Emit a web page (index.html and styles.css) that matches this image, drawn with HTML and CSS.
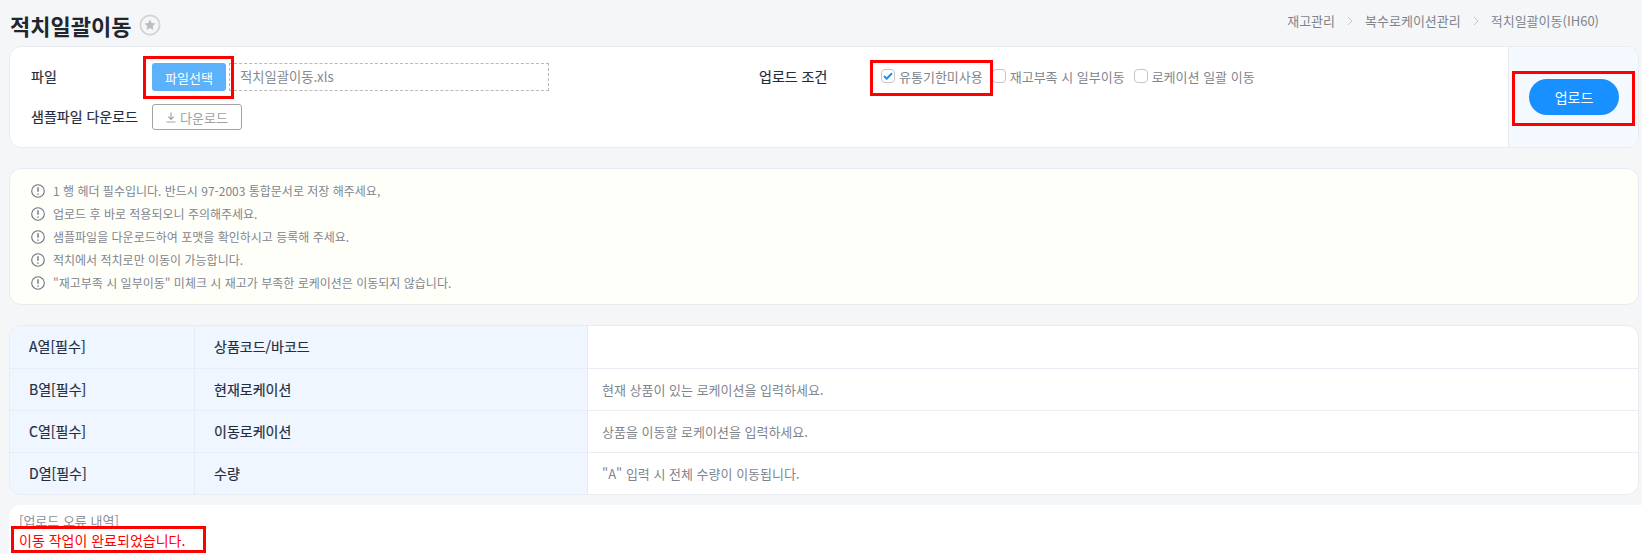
FILE: index.html
```html
<!DOCTYPE html>
<html lang="ko">
<head>
<meta charset="utf-8">
<title>적치일괄이동</title>
<link rel="stylesheet" href="styles.css">
</head>
<body>
<header class="top">
  <div class="title-wrap">
    <h1 class="title">적치일괄이동</h1>
    <span class="star">
      <svg width="22" height="22" viewBox="0 0 22 22"><circle cx="11" cy="11" r="9.6" fill="#f5f6f8" stroke="#d3d3d3" stroke-width="1.8"/><path d="M11 5.6l1.7 3.5 3.8.5-2.8 2.6.7 3.8-3.4-1.9-3.4 1.9.7-3.8-2.8-2.6 3.8-.5z" fill="#bdbdbd"/></svg>
    </span>
  </div>
  <nav class="crumbs">
    <span>재고관리</span>
    <svg class="chev" width="6" height="10" viewBox="0 0 6 10"><path d="M1 1l4 4-4 4" fill="none" stroke="#c4c8cd" stroke-width="1"/></svg>
    <span>복수로케이션관리</span>
    <svg class="chev" width="6" height="10" viewBox="0 0 6 10"><path d="M1 1l4 4-4 4" fill="none" stroke="#c4c8cd" stroke-width="1"/></svg>
    <span>적치일괄이동(IH60)</span>
  </nav>
</header>

<section class="card form-card">
  <div class="form-main">
    <div class="form-col-left">
      <div class="row">
        <span class="label">파일</span>
        <button class="btn-file">파일선택</button>
        <span class="file-name">적치일괄이동.xls</span>
      </div>
      <div class="row row-sample">
        <span class="label">샘플파일 다운로드</span>
        <button class="btn-down">
          <svg width="10" height="11" viewBox="0 0 10 11"><path d="M5 0.5v6.5M2.2 4.6L5 7.4l2.8-2.8M0.5 10h9" fill="none" stroke="#a3a3a3" stroke-width="1.2"/></svg>
          <span>다운로드</span>
        </button>
      </div>
    </div>
    <div class="form-col-right">
      <span class="label label-cond">업로드 조건</span>
      <label class="check"><span class="box"><svg width="10" height="8" viewBox="0 0 10 8"><path d="M1 4l2.7 2.7L9 1.3" fill="none" stroke="#1890ff" stroke-width="2"/></svg></span>유통기한미사용</label>
      <label class="check"><span class="box"></span>재고부족 시 일부이동</label>
      <label class="check"><span class="box"></span>로케이션 일괄 이동</label>
    </div>
  </div>
  <div class="form-side"><button class="btn-upload">업로드</button></div>
</section>

<section class="card notice">
  <ul class="notes">
    <li><svg class="ico" viewBox="0 0 14 14"><circle cx="7" cy="7" r="6.3" fill="none" stroke="#6b7280" stroke-width="1.1"/><path d="M7 3.2v4.6M7 9.4v1.4" stroke="#6b7280" stroke-width="1.4" fill="none"/></svg>1 행 헤더 필수입니다. 반드시 97-2003 통합문서로 저장 해주세요,</li>
    <li><svg class="ico" viewBox="0 0 14 14"><circle cx="7" cy="7" r="6.3" fill="none" stroke="#6b7280" stroke-width="1.1"/><path d="M7 3.2v4.6M7 9.4v1.4" stroke="#6b7280" stroke-width="1.4" fill="none"/></svg>업로드 후 바로 적용되오니 주의해주세요.</li>
    <li><svg class="ico" viewBox="0 0 14 14"><circle cx="7" cy="7" r="6.3" fill="none" stroke="#6b7280" stroke-width="1.1"/><path d="M7 3.2v4.6M7 9.4v1.4" stroke="#6b7280" stroke-width="1.4" fill="none"/></svg>샘플파일을 다운로드하여 포맷을 확인하시고 등록해 주세요.</li>
    <li><svg class="ico" viewBox="0 0 14 14"><circle cx="7" cy="7" r="6.3" fill="none" stroke="#6b7280" stroke-width="1.1"/><path d="M7 3.2v4.6M7 9.4v1.4" stroke="#6b7280" stroke-width="1.4" fill="none"/></svg>적치에서 적치로만 이동이 가능합니다.</li>
    <li><svg class="ico" viewBox="0 0 14 14"><circle cx="7" cy="7" r="6.3" fill="none" stroke="#6b7280" stroke-width="1.1"/><path d="M7 3.2v4.6M7 9.4v1.4" stroke="#6b7280" stroke-width="1.4" fill="none"/></svg>"재고부족 시 일부이동" 미체크 시 재고가 부족한 로케이션은 이동되지 않습니다.</li>
  </ul>
</section>

<section class="card spec">
  <div class="spec-row"><div class="c1">A열[필수]</div><div class="c2">상품코드/바코드</div><div class="c3"></div></div>
  <div class="spec-row"><div class="c1">B열[필수]</div><div class="c2">현재로케이션</div><div class="c3">현재 상품이 있는 로케이션을 입력하세요.</div></div>
  <div class="spec-row"><div class="c1">C열[필수]</div><div class="c2">이동로케이션</div><div class="c3">상품을 이동할 로케이션을 입력하세요.</div></div>
  <div class="spec-row"><div class="c1">D열[필수]</div><div class="c2">수량</div><div class="c3">"A" 입력 시 전체 수량이 이동됩니다.</div></div>
</section>

<section class="result">
  <div class="result-title">[업로드 오류 내역]</div>
  <div class="result-msg">이동 작업이 완료되었습니다.</div>
</section>

<span class="hl hl-file"></span>
<span class="hl hl-check"></span>
<span class="hl hl-upload"></span>
<span class="hl hl-msg"></span>
</body>
</html>
```
FILE: styles.css
```css
* { box-sizing: border-box; }
html, body { margin: 0; padding: 0; }
body {
  position: relative;
  width: 1642px;
  height: 554px;
  overflow: hidden;
  background: #f5f6f8;
  font-family: "Noto Sans CJK KR", "Noto Sans", sans-serif;
  font-size: 14px;
  color: #1f2d3d;
}
button { font-family: inherit; cursor: pointer; }

.top {
  height: 46px;
  display: flex;
  align-items: center;
  justify-content: space-between;
  padding: 4px 43px 0 10px;
}
.title-wrap { display: flex; align-items: center; gap: 8px; }
.title { margin: 0; font-size: 22px; line-height: 28px; font-weight: 700; color: #20262e; }
.star { display: flex; }
.crumbs { display: flex; align-items: center; margin-bottom: 9px; color: #7f848b; font-size: 13px; }
.chev { margin: 0 12px; }

.card {
  margin-left: 9px;
  width: 1630px;
  border: 1px solid #e8ebef;
  border-radius: 12px;
  overflow: hidden;
}

.form-card { display: flex; height: 102px; background: #fff; }
.form-main { flex: 1; display: flex; }
.form-col-left { width: 739px; padding: 16px 0 0 21px; }
.form-col-right { flex: 1; display: flex; align-items: flex-start; padding: 16px 0 0 10px; }
.row { display: flex; align-items: center; height: 28px; }
.row-sample { margin-top: 13px; height: 26px; }
.label { width: 121px; flex: none; padding-bottom: 2px; color: #1f2d3d; -webkit-text-stroke: 0.2px #1f2d3d; white-space: nowrap; }
.label-cond { width: 122px; padding-bottom: 0; line-height: 26px; }
.btn-file {
  width: 74px; height: 28px; padding: 0; border: 0; border-radius: 3px;
  background: #5bb2fb; color: #fff; font-size: 13px;
}
.file-name {
  width: 320px; height: 28px; margin-left: 3px; padding-left: 10px;
  border: 1px dashed #b9b9b9; color: #858a92; line-height: 26px; font-size: 13.3px;
}
.btn-down {
  width: 90px; height: 26px; padding: 0;
  display: flex; align-items: center; justify-content: center; gap: 4px;
  background: #fff; border: 1px solid #a3a3a3; border-radius: 3px;
  color: #a0a0a0; font-size: 13px;
}
.check { display: flex; align-items: center; gap: 4px; height: 26px; margin-right: 9px; color: #7f858d; font-size: 13px; white-space: nowrap; }
.box {
  width: 14px; height: 14px; flex: none;
  display: flex; align-items: center; justify-content: center;
  background: #fff; border: 1px solid #c4c8cd; border-radius: 4px;
}
.form-side {
  width: 130px; flex: none; display: flex; align-items: center; justify-content: center;
  padding-left: 1px;
  background: #f4f9ff; border-left: 1px solid #e8ebef;
}
.btn-upload {
  width: 90px; height: 36px; padding: 0; border: 0; border-radius: 18px;
  background: #1890ff; color: #fff; font-size: 14px;
}

.notice { margin-top: 20px; height: 137px; background: #fffffa; }
.notes { list-style: none; margin: 0; padding: 10px 0 0 21px; }
.notes li {
  display: flex; align-items: center; gap: 8px;
  height: 23px; color: #7f858d; font-size: 12px;
}
.ico { width: 14px; height: 14px; flex: none; }

.spec { margin-top: 20px; height: 170px; background: #fff; }
.spec-row { display: flex; height: 42px; border-bottom: 1px solid #e9eef5; }
.spec-row:first-child { height: 43px; }
.spec-row:last-child { height: 41px; border-bottom: 0; }
.c1, .c2 { background: #eff6ff; border-right: 1px solid #e6ebf3; color: #1f2d3d; line-height: 41px; -webkit-text-stroke: 0.2px #1f2d3d; }
.c1 { width: 185px; padding-left: 19px; }
.c2 { width: 393px; padding-left: 19px; }
.c3 { flex: 1; padding-left: 14px; color: #7f858d; font-size: 13px; line-height: 41px; }

.result {
  margin: 10px 0 0 9px; height: 60px; padding: 7px 0 0 10px;
  background: #fff; border-radius: 12px 0 0 0;
}
.result-title { color: #8a8f96; font-size: 13px; line-height: 18px; }
.result-msg { color: #ff0000; font-size: 14px; line-height: 20px; }

.hl { position: absolute; border: 3px solid #ff0000; pointer-events: none; }
.hl-file { left: 143px; top: 56px; width: 91px; height: 43px; }
.hl-check { left: 870px; top: 60px; width: 123px; height: 36px; }
.hl-upload { left: 1512px; top: 71px; width: 123px; height: 55px; }
.hl-msg { left: 11px; top: 526px; width: 195px; height: 27px; }
```
